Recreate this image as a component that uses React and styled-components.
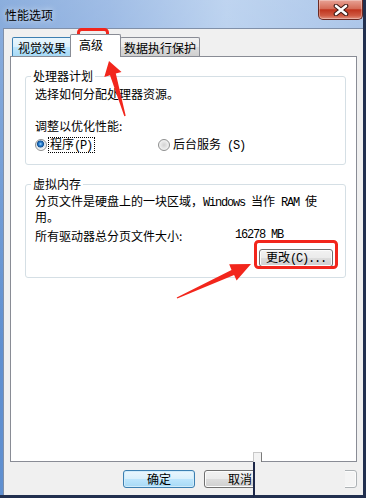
import React from "react";
import styled, { createGlobalStyle } from "styled-components";

const GlobalStyle = createGlobalStyle`
  html, body {
    margin: 0;
    padding: 0;
  }
  body {
    width: 366px;
    height: 498px;
    overflow: hidden;
    background: #fff;
    font-family: "Noto Sans CJK SC", "Liberation Sans", sans-serif;
    font-size: 12px;
    color: #000;
  }
`;

const Window = styled.div`
  position: relative;
  width: 366px;
  height: 498px;
  box-sizing: border-box;
  display: flex;
  flex-direction: column;
  padding: 0 3px 3px 3px;
  background:
    linear-gradient(180deg, rgba(255, 255, 255, 0.28), rgba(255, 255, 255, 0) 70%),
    linear-gradient(90deg, #5f8fd0 0%, #7ca4dc 30%, #a6c4ea 62%, #8fb2e1 100%);
  box-shadow: inset -3px -3px 0 #22304f;
`;

const TitleBar = styled.div`
  height: 28px;
  display: flex;
  justify-content: space-between;
  align-items: flex-start;
`;

const Title = styled.div`
  margin: 9px 0 0 2px;
  line-height: 12px;
  text-shadow: 0 0 6px rgba(255, 255, 255, 0.9);
`;

const CloseButton = styled.div`
  width: 45px;
  height: 20px;
  box-sizing: border-box;
  display: grid;
  place-items: center;
  border: 1px solid #6b2a23;
  border-top: none;
  border-radius: 0 0 5px 5px;
  background: linear-gradient(180deg, #e8a396 0%, #d56c58 45%, #c0341e 52%, #cf5a43 82%, #e39280 100%);
  box-shadow: inset 0 0 0 1px rgba(255, 255, 255, 0.3);
`;

const Client = styled.div`
  flex: 1;
  display: flex;
  flex-direction: column;
  padding: 0 6px;
  background: #f0f0f0;
  border-top: 1px solid #8090a9;
  border-left: 1px solid #8090a9;
`;

const TabStrip = styled.div`
  display: flex;
  align-items: flex-end;
  margin-top: 5px;
  padding-left: 2px;
`;

const Tab = styled.div`
  box-sizing: border-box;
  width: ${(p) => p.$width}px;
  height: ${(p) => (p.$active ? 23 : 19)}px;
  padding: ${(p) => (p.$active ? "3px 0 0 8px" : "3px 0 0 0")};
  line-height: 14px;
  text-align: ${(p) => (p.$active ? "left" : "center")};
  white-space: nowrap;
  border: 1px solid ${(p) => (p.$hover ? "#3c7fb1" : "#898c95")};
  border-bottom: none;
  border-radius: 2px 2px 0 0;
  background: ${(p) =>
    p.$active
      ? "#fff"
      : p.$hover
      ? "linear-gradient(180deg, #eaf6fd 0%, #d9f0fc 50%, #bee6fd 50%, #a7d9f5 100%)"
      : "linear-gradient(180deg, #f2f2f2 0%, #ebebeb 50%, #dddddd 50%, #cfcfcf 100%)"};
  ${(p) =>
    p.$active &&
    `
    position: relative;
    z-index: 2;
    margin: 0 -1px -1px -2px;
    border-color: #898c95;
  `}
`;

const Panel = styled.div`
  flex: 1;
  box-sizing: border-box;
  background: #fff;
  border: 1px solid #898c95;
  padding: 13px 10px 0 14px;
`;

const Group = styled.fieldset`
  margin: ${(p) => (p.$first ? "0" : "13px 0 0 0")};
  min-width: 0;
  padding: ${(p) => p.$padding};
  border: 1px solid #d5dfe5;
  border-radius: 3px;
`;

const Legend = styled.legend`
  padding: 0 2px;
  margin-left: -4px;
  line-height: 12px;
`;

const Text = styled.div`
  line-height: ${(p) => p.$lh || 14}px;
  margin-top: ${(p) => p.$mt || 0}px;
  white-space: nowrap;
`;

// SimSun-like half-width latin: 6px per character
const Latin = styled.span`
  font-family: "Liberation Mono", "DejaVu Sans Mono", monospace;
  font-size: 12px;
  letter-spacing: -1.2px;
  white-space: pre;
`;

const RadioRow = styled.div`
  display: grid;
  grid-template-columns: 123px auto;
  align-items: center;
  height: 14px;
  margin-top: 5px;
`;

const RadioOption = styled.label`
  display: flex;
  align-items: center;
  line-height: 12px;
`;

const Radio = styled.span`
  width: 12px;
  height: 12px;
  box-sizing: border-box;
  border-radius: 50%;
  border: 1px solid #8e8f8f;
  background: ${(p) =>
    p.$checked
      ? "radial-gradient(circle at 45% 40%, #a8ddff 0, #2f86d6 1.5px, #0f4f94 3.2px, #d6e0e8 3.8px, #f3f6f8 5.5px)"
      : "radial-gradient(circle, #d2d2d2 0, #e2e2e2 2.5px, #f6f6f6 5.5px)"};
`;

const RadioLabel = styled.span`
  margin-left: 2px;
  padding: 0 2px 0 1px;
  outline: ${(p) => (p.$focused ? "1px dotted #000" : "none")};
  white-space: nowrap;
`;

const SizeRow = styled.div`
  display: flex;
  line-height: 13px;
  margin-top: 6px;
`;

const SizeLabel = styled.span`
  width: 200px;
`;

const ButtonRow = styled.div`
  display: flex;
  justify-content: flex-end;
  margin-top: 7px;
`;

const Button = styled.button`
  width: ${(p) => p.$width}px;
  height: 18px;
  padding: 0;
  font-family: inherit;
  font-size: 12px;
  line-height: 14px;
  color: ${(p) => (p.$disabled ? "#838383" : "#000")};
  border-radius: 3px;
  border: 1px solid ${(p) => (p.$default ? "#3c7fb1" : p.$disabled ? "#adb2b5" : "#707070")};
  background: ${(p) =>
    p.$default
      ? "linear-gradient(180deg, #eaf6fd 0%, #d9f0fc 50%, #bee6fd 50%, #a7d9f5 100%)"
      : p.$disabled
      ? "#f4f4f4"
      : "linear-gradient(180deg, #f2f2f2 0%, #ebebeb 50%, #dddddd 50%, #cfcfcf 100%)"};
  box-shadow: inset 0 0 0 1px ${(p) => (p.$default ? "#d0ecfb" : "#fcfcfc")};
`;

const ButtonBar = styled.div`
  display: flex;
  justify-content: flex-end;
  gap: 9px;
  padding: 8px 0 7px;
`;

const Patch = styled.div`
  position: absolute;
  left: 253px;
  top: 462px;
  width: 92px;
  height: 36px;
  box-sizing: border-box;
  background: #f0f0f0;
  border-left: 2px solid #1c2748;
  border-bottom: 3px solid #22304f;
`;

const Notch = styled.div`
  position: absolute;
  left: 253px;
  top: 452px;
  width: 9px;
  height: 10px;
  box-sizing: border-box;
  background: #f3f3f3;
  border-left: 1px solid #c8c8c8;
  border-top: 1px solid #c8c8c8;
  border-right: 1px solid #7a7a7a;
`;

const Annotations = styled.svg`
  position: absolute;
  left: 0;
  top: 0;
  pointer-events: none;
`;

const RED = "#f2261c";

export default function App() {
  return (
    <>
      <GlobalStyle />
      <Window>
        <TitleBar>
          <Title>性能选项</Title>
          <CloseButton>
            <svg width="18" height="12" viewBox="0 0 18 12">
              <path d="M4 2 L14 10 M14 2 L4 10" stroke="#3b1712" strokeWidth="4.6" strokeLinecap="round" />
              <path d="M4 2 L14 10 M14 2 L4 10" stroke="#fff" strokeWidth="2.6" strokeLinecap="round" />
            </svg>
          </CloseButton>
        </TitleBar>
        <Client>
          <TabStrip>
            <Tab $width={60} $hover>视觉效果</Tab>
            <Tab $width={51} $active>高级</Tab>
            <Tab $width={80}>数据执行保护</Tab>
          </TabStrip>
          <Panel>
            <Group $first $padding="5px 12px 12px 9px">
              <Legend>处理器计划</Legend>
              <Text>选择如何分配处理器资源。</Text>
              <Text $mt={18}>调整以优化性能:</Text>
              <RadioRow>
                <RadioOption>
                  <Radio $checked />
                  <RadioLabel $focused>程序<Latin>(P)</Latin></RadioLabel>
                </RadioOption>
                <RadioOption>
                  <Radio />
                  <RadioLabel>后台服务<Latin> (S)</Latin></RadioLabel>
                </RadioOption>
              </RadioRow>
            </Group>
            <Group $padding="4px 12px 10px 9px">
              <Legend>虚拟内存</Legend>
              <Text $lh={13}>
                分页文件是硬盘上的一块区域，<Latin>Windows </Latin>当作<Latin> RAM </Latin>使
              </Text>
              <Text $lh={13}>用。</Text>
              <SizeRow>
                <SizeLabel>所有驱动器总分页文件大小:</SizeLabel>
                <Latin>16278 MB</Latin>
              </SizeRow>
              <ButtonRow>
                <Button $width={74}>更改<Latin>(C)...</Latin></Button>
              </ButtonRow>
            </Group>
          </Panel>
          <ButtonBar>
            <Button $width={72} $default>确定</Button>
            <Button $width={72}>取消</Button>
            <Button $width={72} $disabled>应用<Latin>(A)</Latin></Button>
          </ButtonBar>
        </Client>
        <Notch />
        <Patch />
        <Annotations width="366" height="498" viewBox="0 0 366 498">
          <rect x="78.5" y="29.5" width="29" height="26" rx="3" fill="none" stroke={RED} strokeWidth="3" />
          <rect x="255.5" y="241.5" width="81" height="26" rx="3" fill="none" stroke={RED} strokeWidth="3" />
          <polygon
            points="109,61 121.5,71.9 115.8,73.6 125.7,115.8 124.3,116.2 110,75.2 104.3,76.9"
            fill={RED}
          />
          <polygon
            points="251,264 236.6,280.6 234.1,275.1 177.3,298.6 176.7,297.4 231.5,269.9 229.2,264.2"
            fill={RED}
          />
        </Annotations>
      </Window>
    </>
  );
}
